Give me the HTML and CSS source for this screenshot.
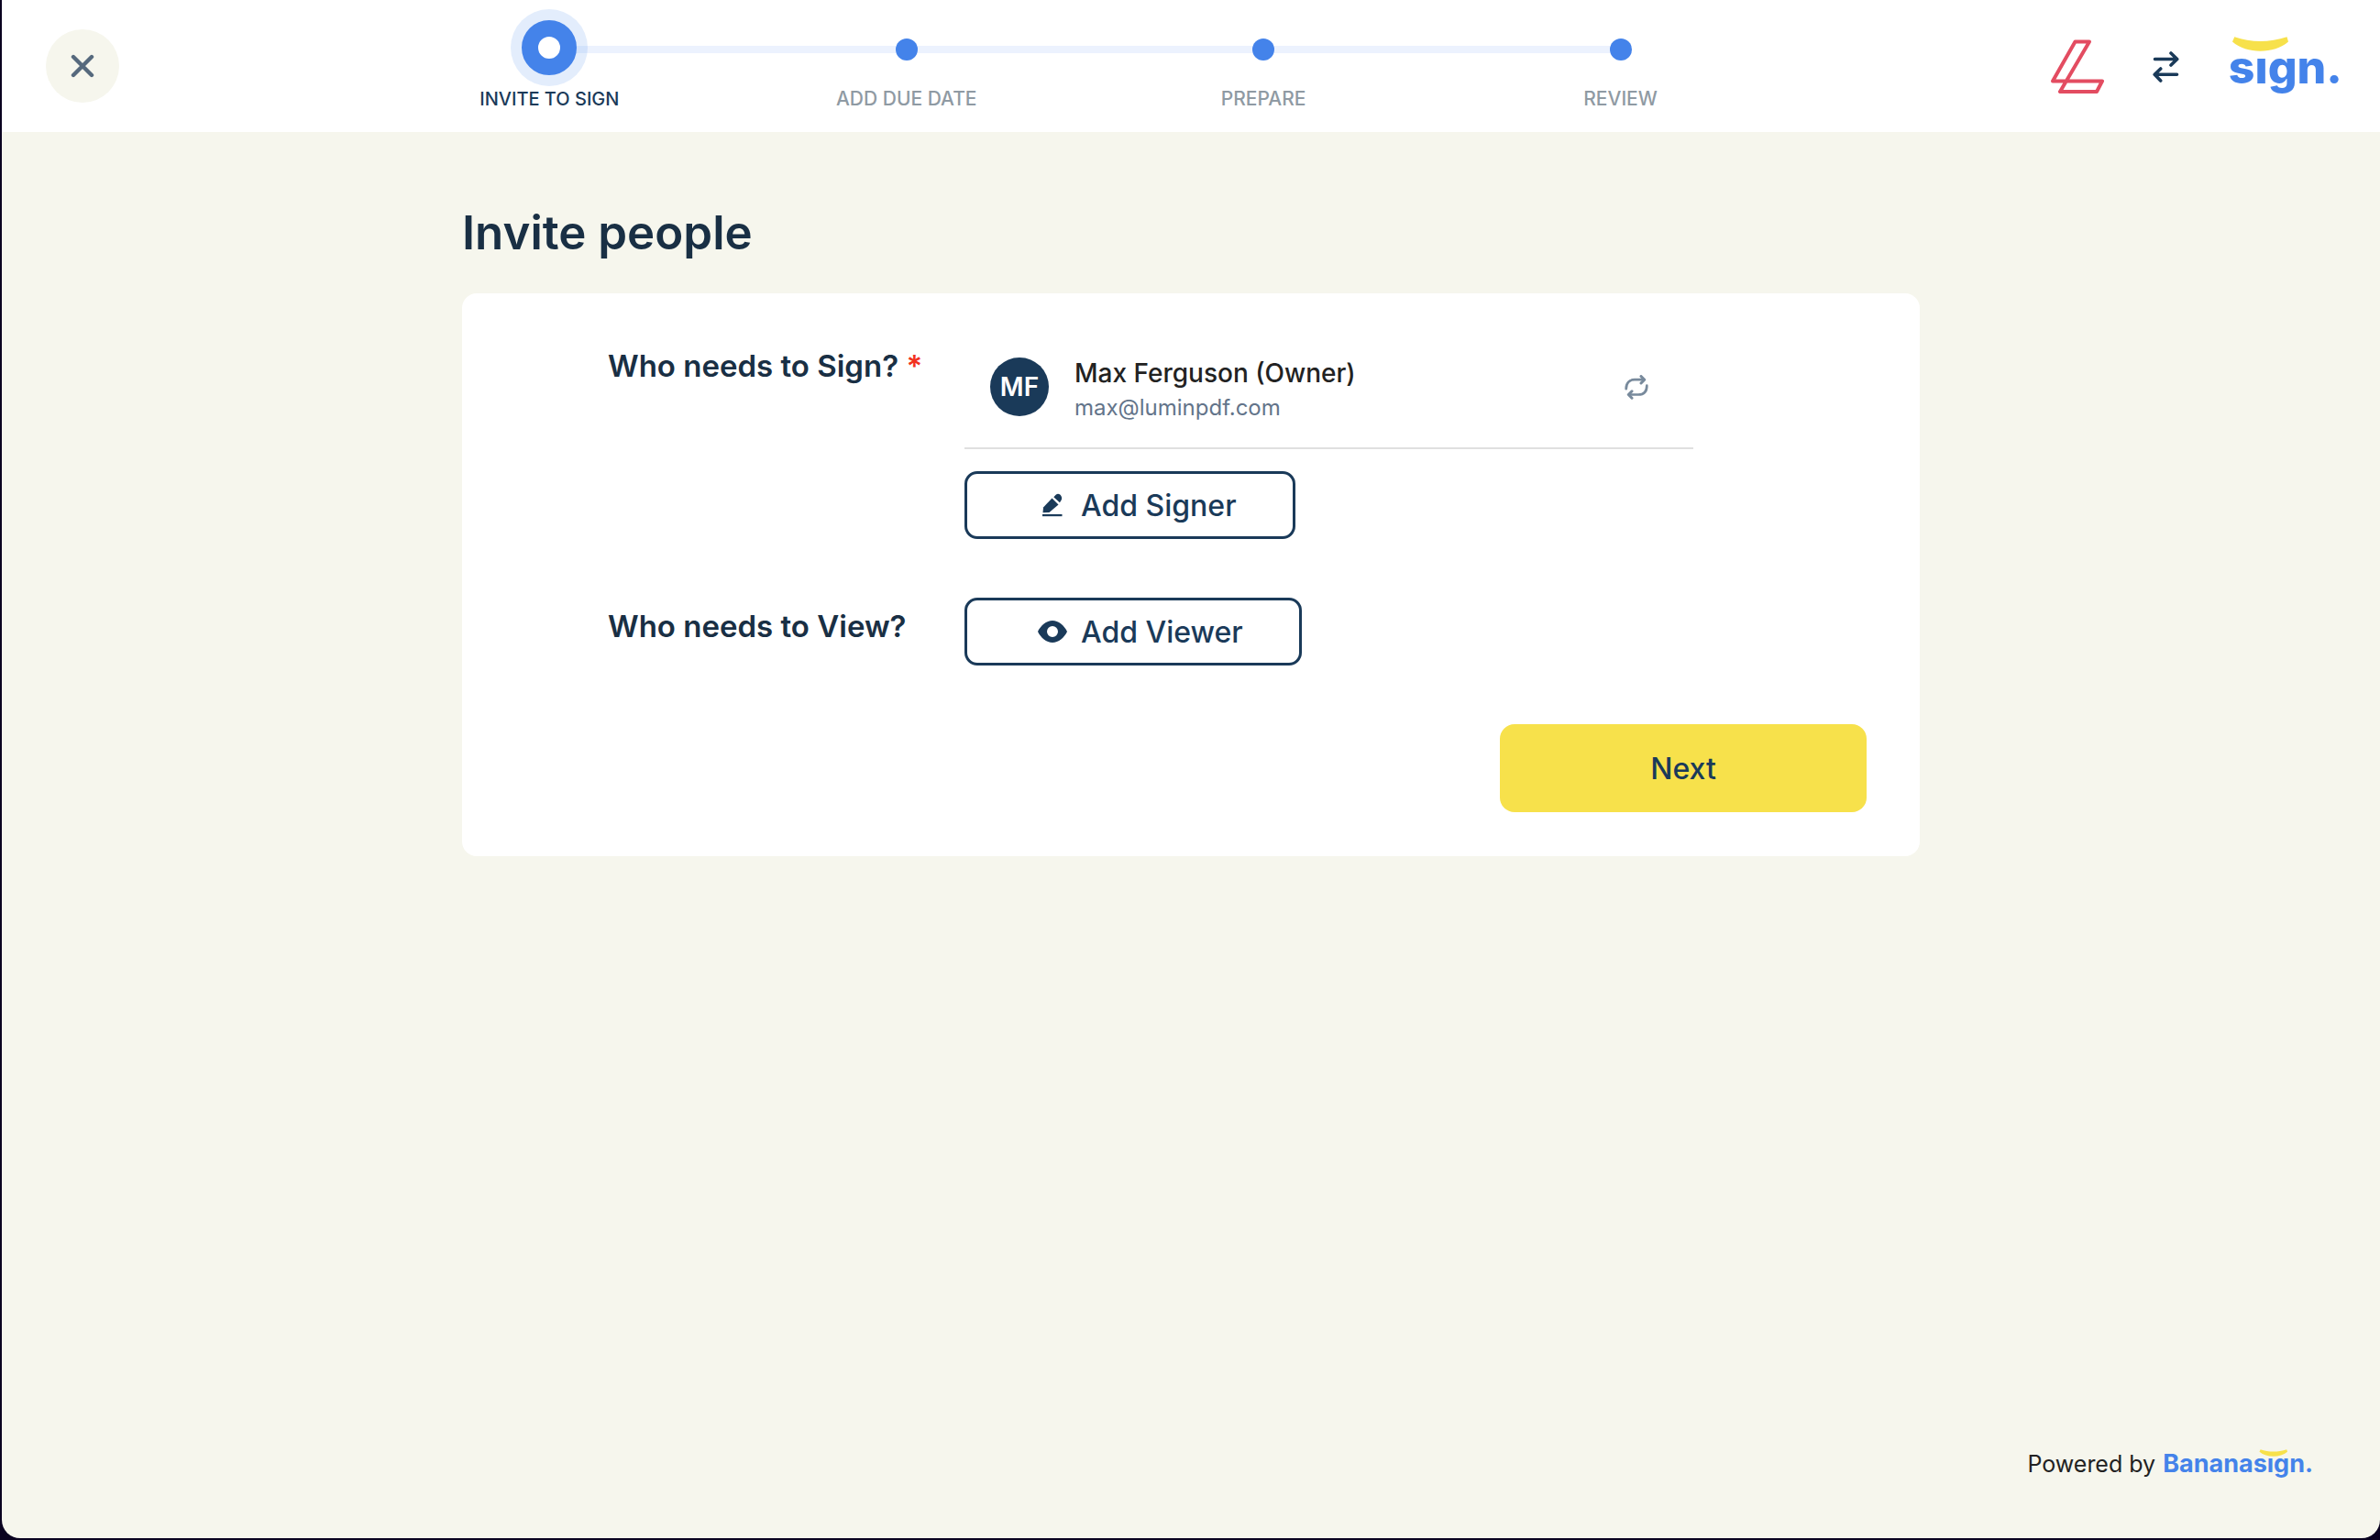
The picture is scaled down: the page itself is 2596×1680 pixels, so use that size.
FILE: index.html
```html
<!DOCTYPE html>
<html lang="en">
<head>
<meta charset="utf-8">
<meta name="viewport" content="width=device-width, initial-scale=1">
<title>Invite people - Bananasign</title>
<link rel="stylesheet" href="styles.css">
</head>
<body>
<div class="app">
  <header class="header">
    <button class="close" type="button" aria-label="Close">
      <svg width="26" height="26" viewBox="0 0 26 26" fill="none" stroke="currentColor" stroke-width="4.4" stroke-linecap="round"><path d="M3 3l20 20M23 3L3 23"/></svg>
    </button>

    <ol class="steps">
      <li class="step step-active" aria-current="step"><span class="marker"><span class="dot"></span></span><span class="step-label">INVITE TO SIGN</span></li>
      <li class="step"><span class="marker"><span class="dot"></span></span><span class="step-label">ADD DUE DATE</span></li>
      <li class="step"><span class="marker"><span class="dot"></span></span><span class="step-label">PREPARE</span></li>
      <li class="step"><span class="marker"><span class="dot"></span></span><span class="step-label">REVIEW</span></li>
    </ol>

    <nav class="products" aria-label="Products">
      <a href="#lumin" aria-label="Lumin">
        <svg width="58" height="60" viewBox="0 0 58 60" fill="none" stroke="#e34c61" stroke-width="4" stroke-linejoin="round"><path d="M26.500 2.500H42L10 57h40l6-11.500H2z"/></svg>
      </a>
      <svg class="swap" width="30" height="36" viewBox="0 0 30 36" fill="none" stroke="currentColor" stroke-width="3.6" stroke-linecap="round" stroke-linejoin="round"><path d="M2.500 9.500H26.500M20 3l6.700 6.500L20 16M26.500 26.300H2.500M8.700 20l-6.500 6.300L8.700 33"/></svg>
      <a class="brand brand-header" href="#sign" aria-label="Sign">sıgn.<svg class="banana" viewBox="0 0 64 17" fill="#f7e14b"><path d="M3.300 .3L1 5.500C9 12.500 20 15.700 31.500 15.700S54 12.500 62 5.500L60.500 .3C51 3.500 41 5 31.500 5S12 3.500 3.300 .3z"/></svg></a>
    </nav>
  </header>

  <main class="main">
    <h1 class="title">Invite people</h1>
    <form class="card">
      <section class="row">
        <h2 class="row-label row-label-person">Who needs to Sign? <span class="required">*</span></h2>
        <div class="row-body">
          <div class="person">
            <span class="avatar">MF</span>
            <div class="person-text">
              <div class="person-name">Max Ferguson (Owner)</div>
              <div class="person-email">max@luminpdf.com</div>
            </div>
            <button class="change" type="button" aria-label="Change signer">
              <svg width="26" height="27" viewBox="0 0 26 27" fill="none" stroke="currentColor" stroke-width="2.700" stroke-linecap="round" stroke-linejoin="round"><path d="M1.700 15.200C1.700 9 5 5.200 11 5.200h10M24.300 11.700C24.300 18 21 21.500 15 21.500H5"/><path d="M18 1.500l3.700 3.700L18 9M8 17.800l-3.700 3.700L8 25.200" stroke-width="3"/></svg>
            </button>
          </div>
          <button class="outline" type="button">
            <span class="outline-icon"><svg width="24" height="26" viewBox="0 0 24 26" fill="currentColor"><path d="M1.500 21.200L2 15.500 11.500 5.500l7 7L8.500 21z"/><path d="M13.300 4.200l2.400-2.400c2-2 4.300-1 5.400.6 1.400 1.700 1.300 4 .3 5.600l-1.500 2.300z"/><path d="M1 23h21.500v2.200H1z"/></svg></span>
            Add Signer
          </button>
        </div>
      </section>

      <section class="row">
        <h2 class="row-label">Who needs to View?</h2>
        <div class="row-body">
          <button class="outline" type="button">
            <span class="outline-icon"><svg width="32" height="24" viewBox="0 0 32 24" fill="currentColor"><path fill-rule="evenodd" d="M0 12C3 5.500 9.500 0 16 0s13 5.500 16 12c-3 6.500-9.500 12-16 12S3 18.500 0 12zm16 6a6 6 0 1 0 0-12 6 6 0 0 0 0 12z"/></svg></span>
            Add Viewer
          </button>
        </div>
      </section>

      <div class="actions"><button class="next" type="submit">Next</button></div>
    </form>
  </main>

  <footer class="footer">
    <span>Powered by</span>
    <a class="brand brand-footer" href="#bananasign" aria-label="Bananasign">Bananasıgn.<svg class="banana" viewBox="0 0 64 17" fill="#f7e14b"><path d="M3.300 .3L1 5.500C9 12.500 20 15.700 31.500 15.700S54 12.500 62 5.500L60.500 .3C51 3.500 41 5 31.500 5S12 3.500 3.300 .3z"/></svg></a>
  </footer>
</div>
</body>
</html>
```
FILE: styles.css
```css
:root {
  --navy: #1a3a59;
  --ink: #192f44;
  --blue: #4483ea;
  --cream: #f6f6ed;
  --yellow: #f7e14b;
}

* { box-sizing: border-box; }

body {
  margin: 0;
  background: #0a0320;
  color: #222;
  font-family: Inter, "Liberation Sans", sans-serif;
}

button {
  margin: 0;
  padding: 0;
  border: 0;
  background: none;
  color: inherit;
  font: inherit;
  cursor: pointer;
}

svg { display: block; }

.app {
  display: flex;
  flex-direction: column;
  min-height: calc(100vh - 2px);
  margin: 0 0 2px 2px;
  border-radius: 0 0 20px 20px;
  background: var(--cream);
}

/* Header */
.header {
  display: flex;
  align-items: center;
  justify-content: space-between;
  padding: 0 41px 0 48px;
  background: #fff;
}

.close {
  display: grid;
  place-items: center;
  width: 80px;
  height: 80px;
  border-radius: 50%;
  background: var(--cream);
  color: #56697d;
}

.steps {
  display: flex;
  width: 60vw;
  height: 144px;
  margin: 0;
  padding: 10px 0 0;
  list-style: none;
  background: linear-gradient(#ecf2fe, #ecf2fe) 50% 50px / 75% 8px no-repeat;
}

.step {
  display: flex;
  flex: 1;
  flex-direction: column;
  align-items: center;
}

.marker {
  display: flex;
  align-items: center;
  height: 88px;
}

.dot {
  width: 24px;
  height: 24px;
  border-radius: 50%;
  background: var(--blue);
}

.step-active .dot {
  align-self: flex-start;
  width: 60px;
  height: 60px;
  margin: 12px;
  border: 18px solid var(--blue);
  background: #fff;
  box-shadow: 0 0 0 12px rgba(68, 131, 234, 0.15);
}

.step-label {
  color: #8f9aa3;
  font-size: 21px;
  font-weight: 500;
  line-height: 20px;
  white-space: nowrap;
}

.step-active .step-label {
  color: var(--navy);
  font-size: 20px;
}

.products {
  display: flex;
  align-items: center;
  gap: 53px;
  padding-top: 2px;
}

.swap { color: var(--navy); }

.brand {
  position: relative;
  color: var(--blue);
  font-weight: 800;
  text-decoration: none;
}

.brand-header {
  font-size: 50px;
  line-height: 60px;
}

.banana {
  position: absolute;
}

.brand-header .banana {
  top: -3px;
  left: 3px;
  width: 64px;
}

/* Content */
.main {
  width: 100%;
  max-width: 1590px;
  margin: 0 auto;
  padding: 80px 0;
}

.title {
  margin: 0 0 36px;
  color: var(--ink);
  font-size: 51px;
  font-weight: 600;
  line-height: 60px;
}

.card {
  display: flex;
  flex-direction: column;
  gap: 64px;
  padding: 36px 58px 48px 10%;
  border-radius: 16px;
  background: #fff;
}

.row {
  display: grid;
  grid-template-columns: 389px minmax(0, 795px);
}

.row-label {
  margin: 0;
  padding-top: 11px;
  color: var(--ink);
  font-size: 33px;
  font-weight: 600;
  line-height: 40px;
}

.row-label-person { padding-top: 23px; }

.required { color: #f2321f; }

.row-body {
  display: flex;
  flex-direction: column;
  align-items: flex-start;
  gap: 24px;
}

.person {
  display: flex;
  align-items: center;
  width: 100%;
  height: 134px;
  padding: 0 49px 0 28px;
  border-bottom: 2px solid #e0e0e0;
}

.avatar {
  display: grid;
  place-items: center;
  width: 64px;
  height: 64px;
  border-radius: 50%;
  background: var(--navy);
  color: #fff;
  font-size: 28px;
  font-weight: 600;
}

.person-text {
  flex: 1;
  margin-left: 28px;
  padding-top: 8px;
  line-height: 38px;
}

.person-name {
  font-size: 28px;
  font-weight: 500;
}

.person-email {
  color: #63748a;
  font-size: 24px;
}

.change { color: #788a9c; }

.outline {
  display: flex;
  align-items: center;
  gap: 11px;
  height: 74px;
  padding: 0 61px 0 73px;
  border: 3px solid var(--navy);
  border-radius: 14px;
  color: var(--navy);
  font-size: 32px;
  font-weight: 500;
}

.outline-icon {
  display: grid;
  place-items: center;
  width: 40px;
}

.actions {
  display: flex;
  justify-content: flex-end;
}

.next {
  width: 400px;
  height: 96px;
  border-radius: 16px;
  background: var(--yellow);
  color: var(--navy);
  font-size: 32px;
  font-weight: 500;
}

/* Footer */
.footer {
  display: flex;
  align-items: center;
  justify-content: flex-end;
  gap: 8px;
  margin-top: auto;
  padding: 0 73px 65px 0;
  font-size: 25px;
  line-height: 32px;
}

.brand-footer {
  font-size: 27px;
  font-weight: 700;
}

.brand-footer .banana {
  top: 0;
  right: 27px;
  width: 32px;
}
```
